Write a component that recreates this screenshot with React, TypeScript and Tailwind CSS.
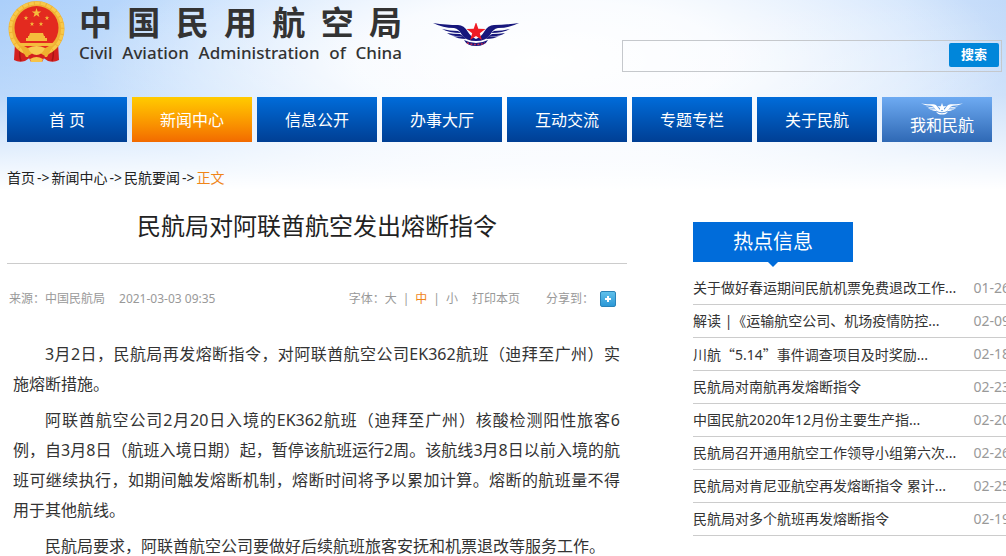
import clsx from "clsx";

const SITE_NAME = ["中", "国", "民", "用", "航", "空", "局"];
const SITE_NAME_EN = ["Civil", "Aviation", "Administration", "of", "China"];

const NAV_ITEMS = [
  { label: "首 页" },
  { label: "新闻中心", active: true },
  { label: "信息公开" },
  { label: "办事大厅" },
  { label: "互动交流" },
  { label: "专题专栏" },
  { label: "关于民航" },
];

const HOT_NEWS = [
  { title: "关于做好春运期间民航机票免费退改工作...", date: "01-26" },
  { title: "解读 |《运输航空公司、机场疫情防控...", date: "02-09" },
  { title: "川航“5.14”事件调查项目及时奖励...", date: "02-18" },
  { title: "民航局对南航再发熔断指令", date: "02-23" },
  { title: "中国民航2020年12月份主要生产指...", date: "02-20" },
  { title: "民航局召开通用航空工作领导小组第六次...", date: "02-26" },
  { title: "民航局对肯尼亚航空再发熔断指令 累计...", date: "02-25" },
  { title: "民航局对多个航班再发熔断指令", date: "02-19" },
];

const PARAGRAPHS = [
  "3月2日，民航局再发熔断指令，对阿联酋航空公司EK362航班（迪拜至广州）实施熔断措施。",
  "阿联酋航空公司2月20日入境的EK362航班（迪拜至广州）核酸检测阳性旅客6例，自3月8日（航班入境日期）起，暂停该航班运行2周。该航线3月8日以前入境的航班可继续执行，如期间触发熔断机制，熔断时间将予以累加计算。熔断的航班量不得用于其他航线。",
  "民航局要求，阿联酋航空公司要做好后续航班旅客安抚和机票退改等服务工作。",
];

const STAR = "M0-10 2.3-3.2 9.5-3.1 3.8 1.2 5.9 8.1 0 4-5.9 8.1-3.8 1.2-9.5-3.1-2.3-3.2Z";

function Emblem() {
  return (
    <svg viewBox="0 0 57 61" className="h-[61px] w-[57px]" aria-hidden="true">
      <path d="M7 42 6 59q5 3 11 1l6-4h11l6 4q6 2 11-1l-1-17Z" fill="#d3201f" />
      <path d="M12 48q-1 7 1 12M45 48q1 7-1 12" stroke="#a81616" strokeWidth="1.5" fill="none" />
      <circle cx="28.500" cy="28" r="28" fill="#efb133" />
      <circle cx="28.500" cy="28" r="26" fill="none" stroke="#f8c94a" strokeWidth="3" strokeDasharray="5 1" />
      <circle cx="28.500" cy="27" r="22" fill="#e32a1f" />
      <g fill="#f5bd3c">
        <path d={STAR} transform="translate(28.500 12) scale(.5)" />
        <path d={STAR} transform="translate(18 17) scale(.24)" />
        <path d={STAR} transform="translate(39 17) scale(.24)" />
        <path d={STAR} transform="translate(24 23) scale(.24)" />
        <path d={STAR} transform="translate(33 23) scale(.24)" />
        <path d="M22 32h13l1 3H21ZM20 35h17v3H20ZM18 37h21v3H18ZM10 42h37l-3 3H13Z" />
      </g>
      <path d="M12 45q9 4 16.500 2 7.500 2 16.500-2l-6 11H18Z" fill="#efb02f" />
      <path d="M20 55q8.500-7 17 0l-3 6H23Z" fill="#d3201f" />
      <path d="M20 47q8.500-4 17 0-3 7-8.500 7T20 47Z" fill="#f8cb50" />
      <path d="M22 58q6.500-4 13 0l-1 3H23Z" fill="#f6c348" />
    </svg>
  );
}

function Wings({ className, white = false }: { className?: string; white?: boolean }) {
  const wing = white ? "#fff" : "#17177c";
  return (
    <svg viewBox="0 0 86 23" className={className} aria-hidden="true">
      {["", "translate(86 0) scale(-1 1)"].map((flip) => (
        <g key={flip} transform={flip} fill={wing}>
          <path d="M0 0q14 2 25 2 6 0 10 7 3 5 8 7v2q-10 0-14-6-3-6-8-7Q10 5 0 0Z" />
          <path d="M9 6q8 2 16 2l3 2Q16 10 9 6Z" />
          <path d="M14 10q6 1 13 1l3 2q-10 1-16-3Z" />
          <path d="M20 13q5 1 10 0l3 3q-8 0-13-3Z" />
        </g>
      ))}
      <path d="M31 17q12 6 24 0-3 6-12 6t-12-6Z" fill={wing} />
      {!white && <path d="M34 20q9 3 18 0" fill="none" stroke="#c12a55" strokeWidth="1.500" strokeDasharray="2 1.500" />}
      <path d={STAR} transform="translate(43 9)" fill={white ? "#fff" : "#f01c24"} />
    </svg>
  );
}

function Header() {
  return (
    <header className="flex h-[97px] items-start pr-1 pl-2">
      <a href="#" className="flex shrink-0 items-start text-[#333]" aria-label="中国民用航空局">
        <span className="pt-px">
          <Emblem />
        </span>
        <span className="ml-3.5 block w-[323px]">
          <span className="flex justify-between pt-0.5 text-[33px] leading-[42px] font-bold">
            {SITE_NAME.map((char) => (
              <span key={char}>{char}</span>
            ))}
          </span>
          <span className="flex justify-between text-[17px] leading-[18px] font-medium">
            {SITE_NAME_EN.map((word) => (
              <span key={word}>{word}</span>
            ))}
          </span>
        </span>
      </a>
      <Wings className="mt-[23px] ml-[31px] h-[23px] w-[86px] shrink-0" />
      <form
        className="mt-10 ml-auto flex h-8 w-[380px] border border-[#c5c8cc] p-0.5"
        onSubmit={(e) => e.preventDefault()}
      >
        <input type="text" aria-label="搜索" className="min-w-0 flex-1 bg-transparent px-2 text-sm outline-none" />
        <button type="submit" className="h-6 w-[50px] rounded-xs bg-[#0086da] text-[13px] font-bold text-white">
          搜索
        </button>
      </form>
    </header>
  );
}

function Nav() {
  return (
    <nav className="mr-3.5 ml-[7px] flex h-[45px] gap-[5px] text-base text-white">
      {NAV_ITEMS.map((item) => (
        <a
          key={item.label}
          href="#"
          className={clsx(
            "flex flex-[120] items-center justify-center bg-linear-to-b",
            item.active ? "from-[#ffcb00] to-[#f26a00]" : "from-[#006cda] to-[#003f94]",
          )}
        >
          {item.label}
        </a>
      ))}
      <a href="#" className="flex-[110] bg-linear-to-b from-[#6eabf2] to-[#2f69b5]">
        <span className="flex flex-col items-center pt-1.5 pl-2.5">
          <Wings white className="h-3 w-[42px] shrink-0" />
          <span className="leading-5">我和民航</span>
        </span>
      </a>
    </nav>
  );
}

function Breadcrumb() {
  return (
    <div className="mt-6 px-[7px] text-sm leading-6 text-[#222]">
      {["首页", "新闻中心", "民航要闻"].map((label) => (
        <span key={label}>
          <a href="#">{label}</a>
          <span className="px-0.5">-&gt;</span>
        </span>
      ))}
      <span className="text-[#f08519]">正文</span>
    </div>
  );
}

function Article() {
  return (
    <article className="w-[620px] shrink-0">
      <h1 className="border-b border-[#ccc] pt-4 pb-[17px] text-center text-2xl leading-10 text-[#222]">
        民航局对阿联酋航空发出熔断指令
      </h1>
      <div className="mt-[25px] flex items-center pr-[11px] pl-0.5 text-xs leading-5 text-[#999]">
        <span>来源：中国民航局</span>
        <span className="ml-3.5">2021-03-03 09:35</span>
        <span className="ml-auto">字体：</span>
        <button type="button">大</button>
        <span className="mx-1.5">|</span>
        <button type="button" className="text-[#f08519]">中</button>
        <span className="mx-1.5">|</span>
        <button type="button">小</button>
        <button type="button" className="ml-3.5">打印本页</button>
        <span className="ml-[26px]">分享到：</span>
        <button
          type="button"
          aria-label="分享"
          className="ml-1.5 flex size-4 items-center justify-center rounded-xs border border-[#2a83b8] bg-linear-to-b from-[#5fc0ea] to-[#2b98d6]"
        >
          <svg viewBox="0 0 8 8" className="size-2" aria-hidden="true">
            <path d="M4 1v6M1 4h6" stroke="#fff" strokeWidth="2" />
          </svg>
        </button>
      </div>
      <div className="mt-[30px] space-y-1.5 pr-[7px] pl-1.5 text-base leading-[30px] text-[#333]">
        {PARAGRAPHS.map((text) => (
          <p key={text} className="text-justify indent-8">
            {text}
          </p>
        ))}
      </div>
    </article>
  );
}

// Chinese quotation marks take a full-width cell, digits keep the Latin face
function NewsTitle({ text }: { text: string }) {
  return text.split(/([“”])/).map((part, i) =>
    part === "“" || part === "”" ? (
      <span key={i} className="font-['Noto_Sans_CJK_SC',sans-serif]">
        {part}
      </span>
    ) : (
      part
    ),
  );
}

function HotNews() {
  return (
    <aside className="ml-[66px] w-[317px] shrink-0 pt-8">
      <h2 className="relative h-10 w-40 bg-[#006cda] text-center text-xl leading-10 text-white">
        热点信息
        <span className="absolute top-full left-1/2 -translate-x-1/2 border-x-[5px] border-t-[5px] border-x-transparent border-t-[#006cda]" />
      </h2>
      <ul className="mt-[10px]">
        {HOT_NEWS.map((news) => (
          <li key={news.title} className="flex h-[33px] items-center border-b border-[#ccc] text-sm">
            <a href="#" className="min-w-0 flex-1 whitespace-nowrap text-[#333]">
              <NewsTitle text={news.title} />
            </a>
            <span className="text-[#999]">{news.date}</span>
          </li>
        ))}
      </ul>
    </aside>
  );
}

export default function App() {
  return (
    <div
      lang="zh-CN"
      className="min-h-screen overflow-x-clip bg-white font-['Noto_Sans','Noto_Sans_CJK_SC',sans-serif]"
    >
      <div className="bg-[linear-gradient(to_bottom,transparent_0,#ffffff33_50%,#fff_100%),radial-gradient(ellipse_46%_150px_at_54%_60px,#fff_0,#ffffffd9_40%,transparent_100%),linear-gradient(to_right,#abcffa_0,#bfdbfc_20%,#d8e8fd_45%,#e0edfd_65%,#cfe3fc_90%,#c2daf9_100%)]">
        <Header />
        <Nav />
        <Breadcrumb />
      </div>
      <div className="flex pl-[7px]">
        <Article />
        <HotNews />
      </div>
    </div>
  );
}
